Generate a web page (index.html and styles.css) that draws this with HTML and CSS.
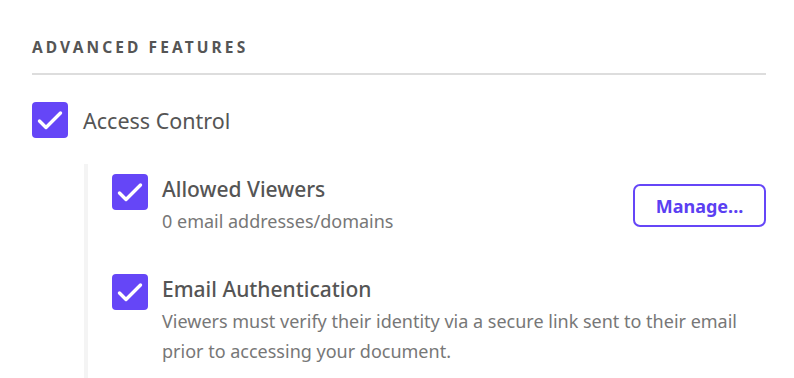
FILE: index.html
```html
<!DOCTYPE html>
<html lang="en">
  <head>
    <meta charset="UTF-8" />
    <meta name="viewport" content="width=device-width, initial-scale=1.0" />
    <title>Advanced Features</title>
    <link rel="stylesheet" href="styles.css">
  </head>
  <body>
    <div class="panel">
      <h2 class="section-title">Advanced Features</h2>

      <!-- Opción principal -->
      <div class="feature">
        <span class="checkbox">
          <svg viewBox="0 0 36 36" width="36" height="36"><path d="M7.5 19 L14 25.5 L28.5 11" /></svg>
        </span>
        <span class="feature-label">Access Control</span>
      </div>

      <!-- Opciones anidadas -->
      <div class="sub-features">
        <div class="sub-feature">
          <span class="checkbox">
            <svg viewBox="0 0 36 36" width="36" height="36"><path d="M7.5 19 L14 25.5 L28.5 11" /></svg>
          </span>
          <div class="sub-text">
            <div class="sub-label">Allowed Viewers</div>
            <div class="sub-desc">0 email addresses/domains</div>
          </div>
          <button class="manage-btn">Manage...</button>
        </div>

        <div class="sub-feature">
          <span class="checkbox">
            <svg viewBox="0 0 36 36" width="36" height="36"><path d="M7.5 19 L14 25.5 L28.5 11" /></svg>
          </span>
          <div class="sub-text">
            <div class="sub-label">Email Authentication</div>
            <div class="sub-desc">Viewers must verify their identity via a secure link sent to their email prior to accessing your document.</div>
          </div>
        </div>
      </div>
    </div>
  </body>
</html>
```

FILE: styles.css
```css
/* Estilos generales */
body {
  font-family: "Noto Sans", "Open Sans", sans-serif;
  margin: 0;
  padding: 0;
  background-color: #fff;
  color: #555;
}

.panel {
  padding: 36px 28px 0 32px;
}

.section-title {
  margin: 0;
  font-size: 15.5px;
  font-weight: 700;
  letter-spacing: 3.1px;
  text-transform: uppercase;
  color: #555;
  line-height: 22px;
  padding-bottom: 15px;
  border-bottom: 2px solid #ddd;
}

/* Casilla marcada */
.checkbox {
  flex: none;
  width: 36px;
  height: 36px;
  border-radius: 4px;
  background-color: #6546f7;
  display: flex;
}

.checkbox path {
  fill: none;
  stroke: #fff;
  stroke-width: 3.4;
  stroke-linecap: round;
  stroke-linejoin: round;
}

.feature {
  display: flex;
  align-items: center;
  gap: 15px;
  margin-top: 27px;
}

.feature-label {
  font-size: 21.5px;
}

/* Bloque anidado */
.sub-features {
  margin: 26px 0 0 52px;
  padding: 10px 0 14px 24px;
  border-left: 4px solid #f4f4f4;
}

.sub-feature {
  display: flex;
  align-items: flex-start;
  gap: 14px;
  margin-bottom: 38px;
}

.sub-feature:last-child {
  margin-bottom: 0;
}

.sub-text {
  flex: 1;
}

.sub-label {
  font-size: 21px;
  font-weight: 500;
  line-height: 28px;
  margin: 1px 0 3px;
}

.sub-desc {
  font-size: 18px;
  line-height: 30px;
  color: #777;
}

/* Botón */
.manage-btn {
  margin-top: 10px;
  width: 133px;
  height: 43px;
  border: 2px solid #6546f7;
  border-radius: 7px;
  background-color: #fff;
  color: #5b3ff2;
  font-family: inherit;
  font-size: 18px;
  font-weight: 700;
  cursor: pointer;
}
```
